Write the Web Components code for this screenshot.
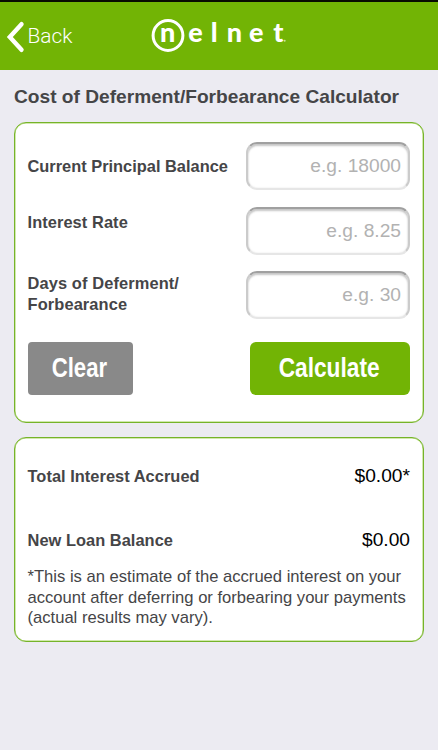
<!DOCTYPE html>
<html lang="en">
<head>
<meta charset="utf-8">
<meta name="viewport" content="width=device-width, initial-scale=1">
<title>Cost of Deferment/Forbearance Calculator</title>
<style>
    body {
        margin: 0;
        height: 750px;
        overflow: hidden;
        background-color: #ecebf2;
        color: #454547;
        font-family: "Liberation Sans", Arial, sans-serif;
    }
</style>
</head>
<body>
<calculator-page></calculator-page>

<script>
class NavBar extends HTMLElement{
    constructor(){
        super();
        const template=document.createElement('template');
        template.innerHTML=`
            <style>
            :host {
                display: grid;
                grid-template-columns: 1fr 144px 1fr;
                height: 68px;
                border-top: 2px solid #080b02;
                background-color: #72b405;
                color: #fff;
            }
            .back {
                display: flex;
                align-items: flex-start;
                padding: 19px 0 0 6px;
            }
            .back svg {
                flex: none;
                width: 19px;
                height: 32px;
            }
            .back span {
                margin-left: 2.5px;
                font: 300 20.8px/31px Roboto, "Liberation Sans", sans-serif;
            }
            .logo {
                width: 144px;
                height: 44px;
                margin-top: 11px;
                overflow: visible;
                font-family: Lato, "Open Sans", sans-serif;
                font-weight: 900;
            }
            </style>
            <a class="back">
                <svg viewBox="0 0 19 32"><path d="M15.5 3.2 3.8 16 15.5 28.8" fill="none" stroke="#fff" stroke-width="4.4" stroke-linecap="round" stroke-linejoin="miter"/></svg>
                <span><slot></slot></span>
            </a>
            <svg class="logo" viewBox="-4 -5 144 44" fill="#fff">
                <circle cx="17" cy="17.5" r="14.9" fill="none" stroke="#fff" stroke-width="3"/>
                <text y="24.3" font-size="27" x="9 37.2 59.8 75.7 97.9 122.3">nelnet</text>
                <circle cx="133.7" cy="22.8" r="1" opacity=".6"/>
            </svg>
        `;
        this.attachShadow({mode : 'open'});
        this.shadowRoot.appendChild(template.content.cloneNode(true));
    }
}
customElements.define('nav-bar',NavBar);

class CardPanel extends HTMLElement{
    constructor(){
        super();
        const template=document.createElement('template');
        template.innerHTML=`
            <style>
            :host {
                display: block;
                box-sizing: border-box;
                padding: 0 13px 0 12.5px;
                border: 1px solid #76b32a;
                border-radius: 12px;
                background-color: #fff;
                box-shadow: inset 0 0 0 .5px #a5d35c;
            }
            </style>
            <slot></slot>
        `;
        this.attachShadow({mode : 'open'});
        this.shadowRoot.appendChild(template.content.cloneNode(true));
    }
}
customElements.define('card-panel',CardPanel);

class FieldRow extends HTMLElement{
    constructor(){
        super();
        const template=document.createElement('template');
        template.innerHTML=`
            <style>
            :host {
                display: flex;
                justify-content: space-between;
                height: 48px;
            }
            label {
                padding-top: var(--label-top, 13.5px);
                font-size: 16.4px;
                font-weight: bold;
                line-height: 20.5px;
            }
            input {
                box-sizing: border-box;
                width: 164px;
                height: 48px;
                margin: 0;
                padding: 0 7px;
                border: 2px solid;
                border-color: #a0a0a0 #cbcbcb #e6e6e6;
                border-radius: 11px;
                background-color: #fff;
                box-shadow: inset 0 2px 2px #c6c6c6, inset 0 0 2px #e2e2e2;
                font: 19.2px "Liberation Sans", Arial, sans-serif;
                text-align: right;
                outline: none;
            }
            input::placeholder {
                color: #b2b2b2;
            }
            </style>
            <label for="value"><slot></slot></label>
            <input id="value" type="text">
        `;
        this.attachShadow({mode : 'open'});
        this.shadowRoot.appendChild(template.content.cloneNode(true));
        this.shadowRoot.querySelector('input').placeholder=this.getAttribute('hint');
    }
}
customElements.define('field-row',FieldRow);

class ActionButton extends HTMLElement{
    constructor(){
        super();
        const template=document.createElement('template');
        template.innerHTML=`
            <style>
            :host {
                display: block;
            }
            button {
                display: flex;
                align-items: center;
                justify-content: center;
                width: 100%;
                height: 53px;
                padding: 0 2px 2px 0;
                border: 0;
                border-radius: var(--button-radius, 6px);
                background-color: var(--button-color, #72b405);
                color: #fff;
                font: bold 27.5px "Liberation Sans", Arial, sans-serif;
            }
            /* squeezed to a condensed face */
            span {
                transform: scaleX(var(--squeeze, .83));
            }
            </style>
            <button type="button"><span><slot></slot></span></button>
        `;
        this.attachShadow({mode : 'open'});
        this.shadowRoot.appendChild(template.content.cloneNode(true));
    }
}
customElements.define('action-button',ActionButton);

class ResultRow extends HTMLElement{
    constructor(){
        super();
        const template=document.createElement('template');
        template.innerHTML=`
            <style>
            :host {
                display: flex;
                justify-content: space-between;
                height: 24px;
                line-height: 24px;
            }
            .name {
                font-size: 16.4px;
                font-weight: bold;
                letter-spacing: .04px;
            }
            .amount {
                color: #000;
                font-size: 19.2px;
            }
            </style>
            <span class="name"><slot></slot></span>
            <span class="amount"><slot name="amount"></slot></span>
        `;
        this.attachShadow({mode : 'open'});
        this.shadowRoot.appendChild(template.content.cloneNode(true));
    }
}
customElements.define('result-row',ResultRow);

class CalculatorPage extends HTMLElement{
    constructor(){
        super();
        const template=document.createElement('template');
        template.innerHTML=`
            <style>
            :host {
                display: block;
            }
            main {
                padding: 0 14px;
            }
            h1 {
                margin: 0;
                padding-top: 15px;
                height: 37px;
                font-size: 19.15px;
                line-height: 24px;
                white-space: nowrap;
            }
            .form {
                height: 301px;
                padding-top: 19px;
            }
            field-row {
                margin-bottom: 16.5px;
            }
            .rate {
                --label-top: 5px;
                letter-spacing: .08px;
            }
            .days {
                --label-top: 2px;
                letter-spacing: .12px;
            }
            .actions {
                display: flex;
                justify-content: space-between;
                padding-top: 6.5px;
            }
            .clear {
                width: 105px;
                --button-color: #898989;
                --button-radius: 4px;
                --squeeze: .805;
            }
            .calculate {
                width: 160px;
                --squeeze: .825;
            }
            .results {
                height: 205px;
                margin-top: 14px;
                padding-top: 25.5px;
            }
            result-row + result-row {
                margin-top: 40px;
            }
            p {
                margin: 15.5px 0 0;
                font-size: 16.6px;
                line-height: 20.5px;
                white-space: nowrap;
            }
            </style>
            <nav-bar>Back</nav-bar>
            <main>
                <h1>Cost of Deferment/Forbearance Calculator</h1>
                <card-panel class="form">
                    <field-row hint="e.g. 18000">Current Principal Balance</field-row>
                    <field-row class="rate" hint="e.g. 8.25">Interest Rate</field-row>
                    <field-row class="days" hint="e.g. 30">Days of Deferment/<br>Forbearance</field-row>
                    <section class="actions">
                        <action-button class="clear">Clear</action-button>
                        <action-button class="calculate">Calculate</action-button>
                    </section>
                </card-panel>
                <card-panel class="results">
                    <result-row>Total Interest Accrued<span slot="amount">$0.00*</span></result-row>
                    <result-row>New Loan Balance<span slot="amount">$0.00</span></result-row>
                    <p>*This is an estimate of the accrued interest on your<br>account after deferring or forbearing your payments<br>(actual results may vary).</p>
                </card-panel>
            </main>
        `;
        this.attachShadow({mode : 'open'});
        this.shadowRoot.appendChild(template.content.cloneNode(true));
    }
}
customElements.define('calculator-page',CalculatorPage);
</script>
</body>
</html>
